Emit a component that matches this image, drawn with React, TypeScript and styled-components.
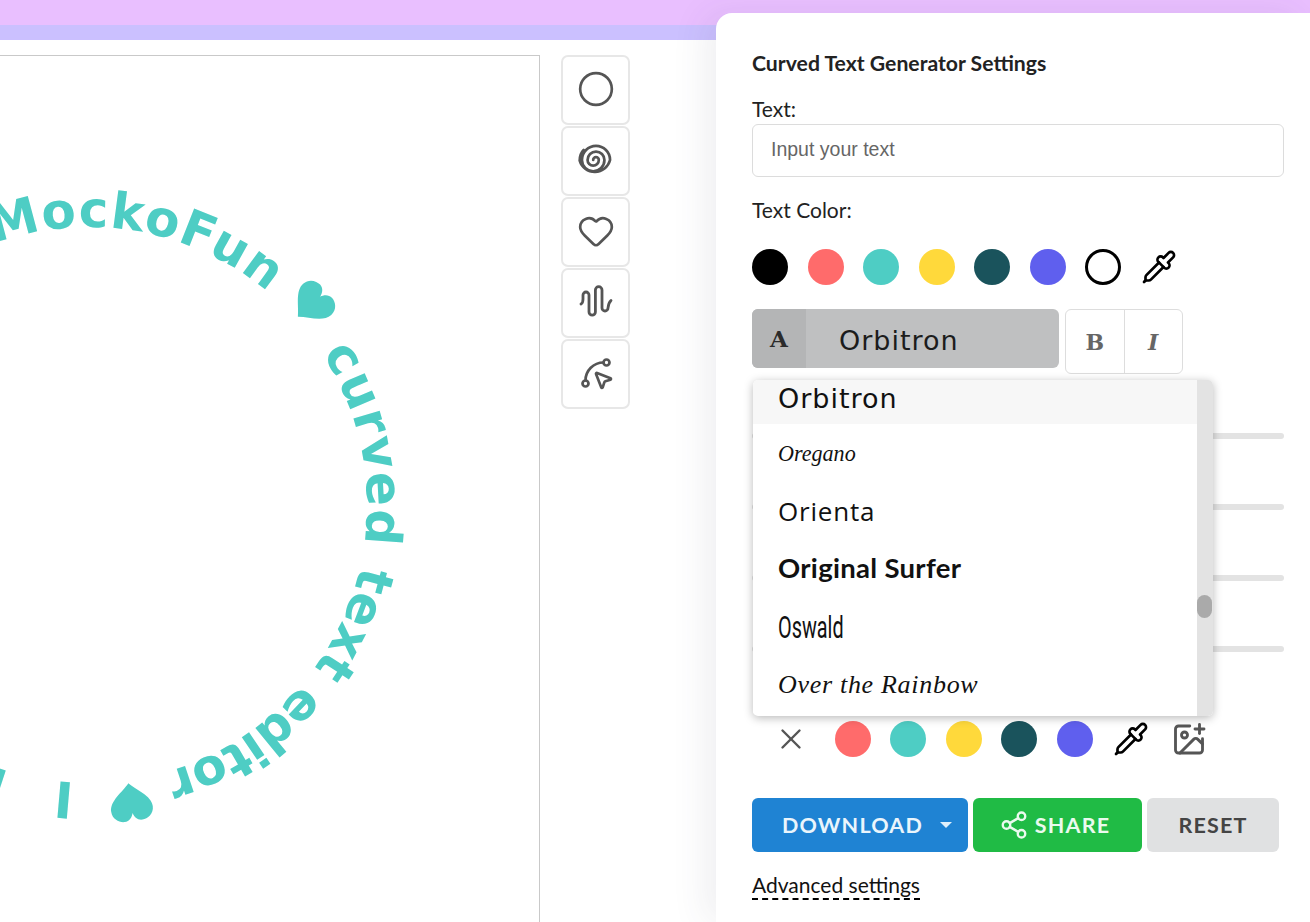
import { ImagePlus, Circle, Heart, Pipette, Share2, SplinePointer, X } from "lucide-react"
import styled, { createGlobalStyle } from "styled-components"

const GlobalStyle = createGlobalStyle`
	html, body {
		margin: 0;
		padding: 0;
		background: #fff;
		font-family: "Lato", "Liberation Sans", sans-serif;
		color: #111;
	}
`

const Page = styled.div`
	width: 1310px;
	height: 922px;
	overflow: hidden;
`

const PinkBand = styled.div`
	height: 25px;
	background: #e9bfff;
`

const LilacBand = styled.div`
	height: 15px;
	background: #cbc0ff;
`

const Workspace = styled.div`
	display: flex;
	align-items: flex-start;
	height: 882px;
`

const Canvas = styled.div`
	flex: none;
	width: 539px;
	height: 867px;
	margin-top: 15px;
	border-top: 1px solid #c9c9c9;
	border-right: 1px solid #c9c9c9;
	background: #fff;
`

const CurvedArt = styled.svg`
	display: block;
	width: 539px;
	height: 867px;
`

const CurvedLabel = styled.text`
	font-family: "DejaVu Sans", sans-serif;
	font-size: 50px;
	font-weight: 700;
	fill: #4ecdc4;
`

const ShapeBar = styled.div`
	flex: none;
	display: flex;
	flex-direction: column;
	gap: 1px;
	width: 69px;
	margin: 15px 0 0 21px;
`

const ShapeButton = styled.button`
	display: flex;
	align-items: center;
	justify-content: center;
	width: 69px;
	height: 70px;
	padding: 0 0 2px;
	border: 2px solid #e7e7e7;
	border-radius: 7px;
	background: #fff;
	color: #555;
`

const Panel = styled.aside`
	flex: none;
	position: relative;
	width: 594px;
	height: 909px;
	margin: -27px 0 0 86px;
	padding: 37px 26px 0 36px;
	box-sizing: border-box;
	border-radius: 16px 0 0 0;
	background: #fff;
	box-shadow: -12px 0 34px rgba(60, 70, 90, 0.08);
`

const PanelTitle = styled.h2`
	margin: 0 0 20px;
	font-size: 21.2px;
	line-height: 26px;
	font-weight: 700;
	color: #222;
`

const FieldLabel = styled.div`
	font-size: 21px;
	line-height: 26px;
	color: #222;
`

const TextInput = styled.input`
	display: block;
	width: 100%;
	height: 53px;
	margin: 2px 0 20px;
	padding: 0 18px 2px;
	box-sizing: border-box;
	border: 1px solid #dcdcdc;
	border-radius: 6px;
	font-family: "Liberation Sans", sans-serif;
	font-size: 19.5px;
	&::placeholder {
		color: #666;
	}
`

const SwatchRow = styled.div<{ $step: number; $left: number; $top: number }>`
	display: flex;
	align-items: center;
	gap: ${(p) => p.$step - 36}px;
	height: 36px;
	margin: ${(p) => p.$top}px 0 0 ${(p) => p.$left}px;
`

const Swatch = styled.span<{ $color: string; $ring?: boolean }>`
	flex: none;
	width: 36px;
	height: 36px;
	box-sizing: border-box;
	border-radius: 50%;
	background: ${(p) => p.$color};
	border: ${(p) => (p.$ring ? "3px solid #000" : "none")};
`

const IconSlot = styled.span<{ $color?: string; $nudge?: number }>`
	flex: none;
	display: flex;
	align-items: center;
	justify-content: center;
	width: 36px;
	height: 36px;
	margin-right: ${(p) => p.$nudge ?? 0}px;
	color: ${(p) => p.$color ?? "#000"};
`

const FontRow = styled.div`
	display: flex;
	align-items: flex-start;
	gap: 6px;
	margin-top: 24px;
`

const FontSelect = styled.div`
	display: flex;
	align-items: stretch;
	width: 307px;
	height: 59px;
	border-radius: 6px;
	overflow: hidden;
	background: #bfc0c1;
`

const FontGlyph = styled.span`
	display: flex;
	align-items: center;
	justify-content: center;
	width: 54px;
	background: #b4b5b6;
	font-family: "DejaVu Serif", serif;
	font-size: 23px;
	font-weight: 700;
	color: #2b2b2b;
`

const FontName = styled.span`
	display: flex;
	align-items: center;
	padding: 3px 0 0 33px;
	font-family: "DejaVu Sans", sans-serif;
	font-size: 27px;
	font-weight: 400;
	letter-spacing: 1px;
	color: #1c1c1c;
`

const StyleGroup = styled.div`
	display: flex;
	width: 118px;
	height: 65px;
	box-sizing: border-box;
	border: 1px solid #ddd;
	border-radius: 6px;
`

const StyleToggle = styled.span<{ $italic?: boolean }>`
	flex: 1;
	display: flex;
	align-items: center;
	justify-content: center;
	font-family: "DejaVu Serif", serif;
	font-size: 22px;
	font-weight: 700;
	font-style: ${(p) => (p.$italic ? "italic" : "normal")};
	color: #666;
	& + & {
		border-left: 1px solid #ddd;
	}
`

const SliderStack = styled.div`
	display: flex;
	flex-direction: column;
	gap: 65px;
	margin-top: 59px;
`

const SliderTrack = styled.div`
	height: 6px;
	border-radius: 3px;
	background: #e3e3e3;
`

const Dropdown = styled.div`
	position: absolute;
	top: 367px;
	left: 37px;
	display: flex;
	width: 460px;
	height: 336px;
	border-radius: 5px;
	overflow: hidden;
	background: #fff;
	box-shadow: 0 2px 10px rgba(0, 0, 0, 0.28);
`

const OptionList = styled.div`
	flex: 1;
	min-width: 0;
`

const Option = styled.div<{ $active?: boolean }>`
	display: flex;
	align-items: center;
	box-sizing: border-box;
	height: ${(p) => (p.$active ? 44 : 58)}px;
	padding: 0 0 ${(p) => (p.$active ? 8 : 0)}px 25px;
	background: ${(p) => (p.$active ? "#f7f7f7" : "#fff")};
	color: #111;
	white-space: nowrap;
`

const FontSample = styled.span<{ $font: string; $size: number; $weight?: number; $italic?: boolean; $spacing?: number; $scale?: number; $lift?: number }>`
	display: inline-block;
	margin-bottom: ${(p) => p.$lift ?? 0}px;
	transform-origin: left center;
	transform: scaleX(${(p) => p.$scale ?? 1});
	font-family: ${(p) => p.$font};
	font-size: ${(p) => p.$size}px;
	font-weight: ${(p) => p.$weight ?? 400};
	font-style: ${(p) => (p.$italic ? "italic" : "normal")};
	letter-spacing: ${(p) => p.$spacing ?? 0}px;
`

const ScrollRail = styled.div`
	flex: none;
	position: relative;
	width: 16px;
	background: #e3e3e3;
`

const ScrollThumb = styled.div`
	position: absolute;
	top: 215px;
	left: 0;
	width: 15px;
	height: 23px;
	border-radius: 8px;
	background: #aaa;
`

const ActionRow = styled.div`
	display: flex;
	gap: 5px;
	margin-top: 41px;
`

const ActionButton = styled.button<{ $bg: string; $fg: string; $width: number; $pad?: string }>`
	display: flex;
	align-items: center;
	justify-content: center;
	gap: 6px;
	width: ${(p) => p.$width}px;
	height: 54px;
	padding: ${(p) => p.$pad ?? "0"};
	border: none;
	border-radius: 6px;
	background: ${(p) => p.$bg};
	color: ${(p) => p.$fg};
	font-family: "Lato", sans-serif;
	font-size: 21.5px;
	font-weight: 700;
	letter-spacing: 1.2px;
`

const Caret = styled.span`
	width: 0;
	height: 0;
	margin-left: 11px;
	border-left: 6px solid transparent;
	border-right: 6px solid transparent;
	border-top: 6px solid #dff0fb;
`

const AdvancedLink = styled.span`
	display: inline-block;
	margin-top: 20px;
	font-size: 21px;
	line-height: 26px;
	color: #111;
	border-bottom: 2px dashed #000;
`

const CX = 89
const CY = 505
const RADIUS = 278

// degrees clockwise from the top of the circle
const arc = (from: number, to: number) => {
	const at = (deg: number) => {
		const rad = (deg * Math.PI) / 180
		return `${(CX + RADIUS * Math.sin(rad)).toFixed(2)} ${(CY - RADIUS * Math.cos(rad)).toFixed(2)}`
	}
	return `M ${at(from)} A ${RADIUS} ${RADIUS} 0 ${to - from > 180 ? 1 : 0} 1 ${at(to)}`
}

const arcLength = (from: number, to: number) => (RADIUS * (to - from) * Math.PI) / 180

const HEART = "M0 19 C-7 11 -21 4 -21 -7 C-21 -15 -14 -19 -9 -19 C-4 -19 -1 -15 0 -11 C1 -15 4 -19 9 -19 C14 -19 21 -15 21 -7 C21 4 7 11 0 19 Z"

const SWATCHES = ["#ff6b6b", "#4ecdc4", "#ffd93b", "#1a535c", "#5f5fee"]

const CURVED_WORDS = [
	{ text: "MockoFun", from: -20, to: 40 },
	{ text: "curved", from: 57, to: 98 },
	{ text: "text", from: 102.5, to: 126 },
	{ text: "editor", from: 130, to: 164 },
	{ text: "I love", from: 183, to: 230 },
]

const SpiralIcon = () => (
	<svg width="36" height="36" viewBox="2 2 32 32" fill="none" stroke="currentColor" strokeWidth="2.4" strokeLinecap="round">
		<path d="M15.5 18 a2.5 2.5 0 0 1 5 0 a5 5 0 0 1 -10 0 a7.5 7.5 0 0 1 15 0 a10 10 0 0 1 -20 0 a12.5 12.5 0 0 1 25 0 a14 14 0 0 1 -27 .5 c0 -4 1 -7 3.5 -9.5" />
	</svg>
)

const WaveIcon = () => (
	<svg width="36" height="36" viewBox="0 0 36 36" fill="none" stroke="currentColor" strokeWidth="2.8" strokeLinecap="round">
		<path d="M3 20 Q5 19 5 15 V11 a3 3 0 0 1 6 0 V28 a3.2 3.2 0 0 0 6.4 0 V6 a3.3 3.3 0 0 1 6.6 0 V24 a3 3 0 0 0 6 0 Q30.4 19 33 16.5" />
	</svg>
)

const App = () => {
	return (
		<Page>
			<GlobalStyle />
			<PinkBand />
			<LilacBand />
			<Workspace>
				<Canvas>
					<CurvedArt viewBox="0 56 539 867">
						<defs>
							{CURVED_WORDS.map((word, i) => (
								<path key={word.text} id={`arc-${i}`} d={arc(word.from, word.to)} />
							))}
						</defs>
						{CURVED_WORDS.map((word, i) => (
							<CurvedLabel key={word.text}>
								<textPath href={`#arc-${i}`} textLength={arcLength(word.from, word.to)}>{word.text}</textPath>
							</CurvedLabel>
						))}
						<path d={HEART} transform="translate(312 304) rotate(48)" fill="#4ecdc4" />
						<path d={HEART} transform="translate(131 802) rotate(172)" fill="#4ecdc4" />
					</CurvedArt>
				</Canvas>

				<ShapeBar>
					<ShapeButton><Circle size={38} strokeWidth={1.7} /></ShapeButton>
					<ShapeButton><SpiralIcon /></ShapeButton>
					<ShapeButton><Heart size={38} strokeWidth={1.7} /></ShapeButton>
					<ShapeButton><WaveIcon /></ShapeButton>
					<ShapeButton><SplinePointer size={36} strokeWidth={1.8} /></ShapeButton>
				</ShapeBar>

				<Panel>
					<PanelTitle>Curved Text Generator Settings</PanelTitle>
					<FieldLabel>Text:</FieldLabel>
					<TextInput placeholder="Input your text" readOnly />
					<FieldLabel>Text Color:</FieldLabel>

					<SwatchRow $step={55.5} $left={0} $top={26}>
						<Swatch $color="#000" />
						{SWATCHES.map((color) => (
							<Swatch key={color} $color={color} />
						))}
						<Swatch $color="#fff" $ring />
						<IconSlot><Pipette size={36} strokeWidth={1.8} /></IconSlot>
					</SwatchRow>

					<FontRow>
						<FontSelect>
							<FontGlyph>A</FontGlyph>
							<FontName>Orbitron</FontName>
						</FontSelect>
						<StyleGroup>
							<StyleToggle>B</StyleToggle>
							<StyleToggle $italic>I</StyleToggle>
						</StyleGroup>
					</FontRow>

					<SliderStack>
						<SliderTrack />
						<SliderTrack />
						<SliderTrack />
						<SliderTrack />
					</SliderStack>

					<SwatchRow $step={55.6} $left={21} $top={69}>
						<IconSlot $color="#555" $nudge={6}><X size={34} strokeWidth={1.7} /></IconSlot>
						{SWATCHES.map((color) => (
							<Swatch key={color} $color={color} />
						))}
						<IconSlot $nudge={3}><Pipette size={36} strokeWidth={1.8} /></IconSlot>
						<IconSlot $color="#555"><ImagePlus size={37} strokeWidth={1.9} /></IconSlot>
					</SwatchRow>

					<ActionRow>
						<ActionButton $bg="#1f83d3" $fg="#eaf5fc" $width={216} $pad="0 0 0 14px">
							DOWNLOAD
							<Caret />
						</ActionButton>
						<ActionButton $bg="#20bb45" $fg="#eafaee" $width={169} $pad="0 6px 0 0">
							<Share2 size={30} strokeWidth={1.9} />
							SHARE
						</ActionButton>
						<ActionButton $bg="#e0e1e2" $fg="#444" $width={132}>RESET</ActionButton>
					</ActionRow>

					<AdvancedLink>Advanced settings</AdvancedLink>

					<Dropdown>
						<OptionList>
							<Option $active>
								<FontSample $font={'"DejaVu Sans", sans-serif'} $size={27} $spacing={1}>Orbitron</FontSample>
							</Option>
							<Option>
								<FontSample $font={'"Liberation Serif", serif'} $size={24} $italic $scale={0.92}>Oregano</FontSample>
							</Option>
							<Option>
								<FontSample $font={'"Open Sans", sans-serif'} $size={26} $spacing={0.8}>Orienta</FontSample>
							</Option>
							<Option>
								<FontSample $font={'"Lato", sans-serif'} $size={27.5} $weight={700} $spacing={0.3} $lift={4}>Original Surfer</FontSample>
							</Option>
							<Option>
								<FontSample $font={'"Roboto", sans-serif'} $size={32} $scale={0.62}>Oswald</FontSample>
							</Option>
							<Option>
								<FontSample $font={'"Liberation Serif", serif'} $size={26} $italic $spacing={0.7}>Over the Rainbow</FontSample>
							</Option>
						</OptionList>
						<ScrollRail>
							<ScrollThumb />
						</ScrollRail>
					</Dropdown>
				</Panel>
			</Workspace>
		</Page>
	)
}

export default App
